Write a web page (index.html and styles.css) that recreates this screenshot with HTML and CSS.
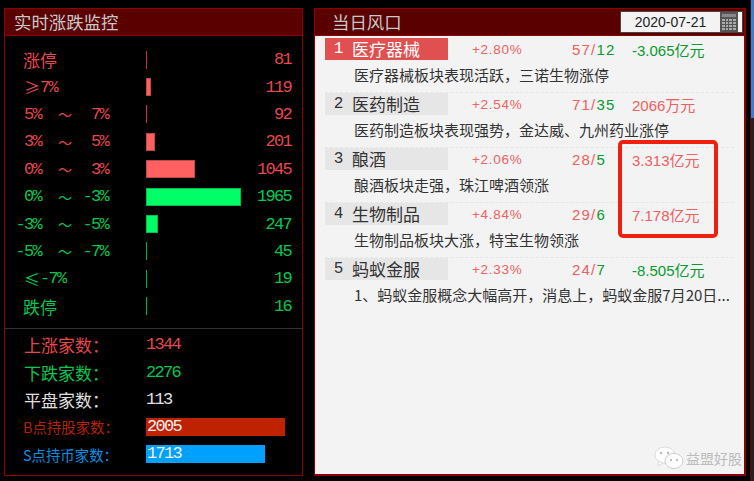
FILE: index.html
```html
<!DOCTYPE html>
<html lang="zh">
<head>
<meta charset="utf-8">
<title>实时涨跌监控</title>
<link rel="stylesheet" href="styles.css">
</head>
<body>
<div class="screen">
  <section class="panel left">
    <header class="head"><h2>实时涨跌监控</h2></header>
    <div class="dist">
      <div class="row up"><span class="lab big">涨停</span><span class="track"><i class="bar thin"></i></span><span class="num">81</span></div>
      <div class="row up"><span class="lab single"><span class="cmp">≥</span>7%</span><span class="track"><i class="bar" style="width:5px"></i></span><span class="num">119</span></div>
      <div class="row up"><span class="lab"><b>5%</b><em>～</em><b>7%</b></span><span class="track"><i class="bar thin"></i></span><span class="num">92</span></div>
      <div class="row up"><span class="lab"><b>3%</b><em>～</em><b>5%</b></span><span class="track"><i class="bar" style="width:9px"></i></span><span class="num">201</span></div>
      <div class="row up"><span class="lab"><b>0%</b><em>～</em><b>3%</b></span><span class="track"><i class="bar" style="width:49px"></i></span><span class="num">1045</span></div>
      <div class="row down"><span class="lab"><b>0%</b><em>～</em><b>-3%</b></span><span class="track"><i class="bar" style="width:95px"></i></span><span class="num">1965</span></div>
      <div class="row down"><span class="lab"><b>-3%</b><em>～</em><b>-5%</b></span><span class="track"><i class="bar" style="width:12px"></i></span><span class="num">247</span></div>
      <div class="row down"><span class="lab"><b>-5%</b><em>～</em><b>-7%</b></span><span class="track"><i class="bar thin"></i></span><span class="num">45</span></div>
      <div class="row down"><span class="lab single"><span class="cmp">≤</span>-7%</span><span class="track"><i class="bar thin"></i></span><span class="num">19</span></div>
      <div class="row down"><span class="lab big">跌停</span><span class="track"><i class="bar thin"></i></span><span class="num">16</span></div>
    </div>
    <div class="stats">
      <div class="stat up"><span class="key">上涨家数：</span><span class="val">1344</span></div>
      <div class="stat down"><span class="key">下跌家数：</span><span class="val">2276</span></div>
      <div class="stat flat"><span class="key">平盘家数：</span><span class="val">113</span></div>
      <div class="stat buy"><span class="key small">B点持股家数：</span><span class="fill" style="width:139px">2005</span></div>
      <div class="stat sell"><span class="key small">S点持币家数：</span><span class="fill" style="width:119px">1713</span></div>
    </div>
  </section>

  <section class="panel right">
    <header class="head">
      <h2>当日风口</h2>
      <div class="date">
        <span class="date-text">2020-07-21</span>
        <svg class="cal" width="18" height="20" viewBox="0 0 18 20">
          <rect width="18" height="20" fill="#555"/>
          <rect x="2" y="2" width="14" height="3" fill="#888"/>
          <g fill="#aaa">
            <rect x="2" y="7" width="3" height="2"/><rect x="6" y="7" width="2" height="2"/><rect x="9" y="7" width="3" height="2"/><rect x="13" y="7" width="3" height="2"/>
            <rect x="2" y="10" width="3" height="2"/><rect x="6" y="10" width="2" height="2"/><rect x="9" y="10" width="3" height="2"/><rect x="13" y="10" width="3" height="2"/>
            <rect x="2" y="13" width="3" height="2"/><rect x="6" y="13" width="2" height="2"/><rect x="9" y="13" width="3" height="2"/><rect x="13" y="13" width="3" height="2"/>
            <rect x="2" y="16" width="3" height="2"/><rect x="6" y="16" width="2" height="2"/><rect x="9" y="16" width="3" height="2"/><rect x="13" y="16" width="3" height="2"/>
          </g>
        </svg>
      </div>
    </header>
    <div class="list">
      <article class="item">
        <div class="line"><div class="chip active"><span class="rank">1</span><span class="name">医疗器械</span></div><span class="chg">+2.80%</span><span class="cnt"><span class="r">57/</span><span class="g">12</span></span><span class="money g2">-3.065亿元</span></div>
        <p class="desc">医疗器械板块表现活跃，三诺生物涨停</p>
      </article>
      <article class="item">
        <div class="line"><div class="chip"><span class="rank">2</span><span class="name">医药制造</span></div><span class="chg">+2.54%</span><span class="cnt"><span class="r">71/</span><span class="g">35</span></span><span class="money">2066万元</span></div>
        <p class="desc">医药制造板块表现强势，金达威、九州药业涨停</p>
      </article>
      <article class="item">
        <div class="line"><div class="chip"><span class="rank">3</span><span class="name">酿酒</span></div><span class="chg">+2.06%</span><span class="cnt"><span class="r">28/</span><span class="g">5</span></span><span class="money">3.313亿元</span></div>
        <p class="desc">酿酒板块走强，珠江啤酒领涨</p>
      </article>
      <article class="item">
        <div class="line"><div class="chip"><span class="rank">4</span><span class="name">生物制品</span></div><span class="chg">+4.84%</span><span class="cnt"><span class="r">29/</span><span class="g">6</span></span><span class="money">7.178亿元</span></div>
        <p class="desc">生物制品板块大涨，特宝生物领涨</p>
      </article>
      <article class="item last">
        <div class="line"><div class="chip"><span class="rank">5</span><span class="name">蚂蚁金服</span></div><span class="chg">+2.33%</span><span class="cnt"><span class="r">24/</span><span class="g">7</span></span><span class="money g2">-8.505亿元</span></div>
        <p class="desc">1、蚂蚁金服概念大幅高开，消息上，蚂蚁金服7月20日...</p>
      </article>
    </div>
    <div class="mark"></div>
    <div class="water">
      <svg width="30" height="24" viewBox="0 0 30 24">
        <ellipse cx="11" cy="9" rx="10" ry="8" fill="#fff" stroke="#ddd"/>
        <path d="M5 15l-1 5 5-3z" fill="#fff" stroke="#ddd"/>
        <ellipse cx="20" cy="15" rx="9" ry="7.5" fill="#fff" stroke="#ccc"/>
        <circle cx="7" cy="7" r="1.2" fill="#bbb"/><circle cx="14" cy="7" r="1.2" fill="#bbb"/>
        <circle cx="17" cy="14" r="1.1" fill="#aaa"/><circle cx="23" cy="14" r="1.1" fill="#aaa"/>
      </svg>
      <span>益盟好股</span>
    </div>
  </section>
  <aside class="edge"><div class="edge-blue"></div></aside>
</div>
</body>
</html>
```

FILE: styles.css
```css
* { box-sizing: border-box; margin: 0; padding: 0; }
html, body { width: 754px; height: 481px; overflow: hidden; background: #000; }
body { font-family: "Noto Sans CJK SC", "Liberation Sans", sans-serif; }
.screen { display: flex; gap: 11px; width: 754px; height: 481px; padding: 8px 0 5px 4px; }
.panel { position: relative; height: 468px; border: 1px solid #8c0000; display: flex; flex-direction: column; }
.left { width: 299px; background: #000; }
.right { width: 432px; background: #f3f3f3; border-width: 1px 2px 2px 1px; }
.head { height: 27px; flex: none; background: #5a0000; border-bottom: 1px solid #8c0000; display: flex; align-items: center; justify-content: space-between; }
.head h2 { font-size: 17.4px; font-weight: 400; color: #c8c8c8; line-height: 26px; }
.left .head h2 { padding-left: 9px; }
.right .head h2 { padding-left: 17px; }

.edge { width: 4px; height: 481px; margin: -8px 0 -5px -7px; border-left: 1px solid #6a0000; background: #222; }
.edge-blue { height: 118px; background: #2f83d6; }

.dist { height: 293px; padding-top: 10px; border-bottom: 1px solid #333; }
.row { height: 27.4px; display: flex; align-items: center; font-family: "Liberation Mono", monospace; font-size: 17px; letter-spacing: -1.7px; }
.up { color: #e5484d; }
.down { color: #00c850; }
.lab { width: 141px; flex: none; display: grid; grid-template-columns: 36px 36px 31px; align-items: center; }
.lab b { font-weight: 400; text-align: right; white-space: nowrap; }
.lab em { font-style: normal; width: 24px; margin-left: 12px; text-align: center; font-family: "Noto Sans CJK SC", sans-serif; font-size: 14px; letter-spacing: 0; }
.lab.big { display: block; padding-left: 18px; font: 17px "Noto Sans CJK SC", sans-serif; letter-spacing: 0; }
.lab.single { display: flex; align-items: center; padding-left: 19px; }
.cmp { width: 16px; font: 16px "Noto Sans CJK SC", sans-serif; letter-spacing: 0; }
.track { width: 110px; flex: none; height: 18px; display: block; }
.bar { display: block; height: 18px; border: 1px solid rgba(0,0,0,.25); }
.up .bar { background: #ff6060; }
.down .bar { background: #00ff66; }
.bar.thin { width: 1px; border: 0; }
.up .bar.thin { background: #c0393d; }
.down .bar.thin { background: #00b04a; }
.num { width: 35px; text-align: right; }

.stats { padding-top: 2px; }
.stat { height: 27.4px; display: flex; align-items: center; font-size: 17px; }
.key { width: 141px; padding-left: 19px; letter-spacing: 0; }
.val { font-family: "Liberation Mono", monospace; font-size: 17px; letter-spacing: -1.7px; }
.flat { color: #e0e0e0; }
.key.small { font-size: 14.4px; padding-left: 18px; }
.buy .key { color: #b82000; }
.sell .key { color: #0090e8; }
.fill { height: 18px; line-height: 18px; font-family: "Liberation Mono", monospace; font-size: 17px; color: #f0f0f0; letter-spacing: -1.7px; padding-left: 1px; }
.buy .fill { background: #bf2200; }
.sell .fill { background: #00a0ff; }

.date { width: 123px; height: 22px; margin-right: 1px; background: #f3f3f3; border: 1px solid #444; display: flex; align-items: center; }
.date-text { width: 99px; text-align: center; font-family: "Liberation Sans", sans-serif; font-size: 14px; color: #222; }

.list { padding: 2px 10px 0 10px; }
.item { height: 55px; border-bottom: 1px dashed #e6e6e6; }
.item.last { border: 0; }
.line { height: 22px; display: flex; align-items: center; }
.chip { width: 123px; height: 21.5px; background: #e6e6e6; display: flex; align-items: center; color: #333; }
.chip.active { background: #e05050; color: #fff; }
.rank { width: 27px; text-align: center; font-family: "Liberation Mono", monospace; font-size: 16px; }
.name { font-size: 17px; line-height: 22px; }
.chg { margin-left: 24px; width: 100px; font-family: "Liberation Sans", sans-serif; font-size: 13.5px; letter-spacing: .7px; color: #f06060; }
.cnt { width: 60px; font-family: "Liberation Sans", sans-serif; font-size: 15px; letter-spacing: 1.2px; }
.cnt .r { color: #f06060; }
.cnt .g { color: #0a9a30; }
.money { font-size: 15px; color: #f06060; font-family: "Liberation Sans", "Noto Sans CJK SC", sans-serif; white-space: nowrap; }
.money.g2 { color: #0a9a30; }
.desc { padding: 4px 0 0 29px; font-size: 15px; line-height: 22px; color: #333; white-space: nowrap; }

.mark { position: absolute; left: 303px; top: 131px; width: 100px; height: 98px; border: 4px solid #f02010; border-radius: 5px; }
.water { position: absolute; right: 2px; bottom: 4px; display: flex; align-items: center; gap: 2px; font-size: 14px; color: #bbb; }
```
